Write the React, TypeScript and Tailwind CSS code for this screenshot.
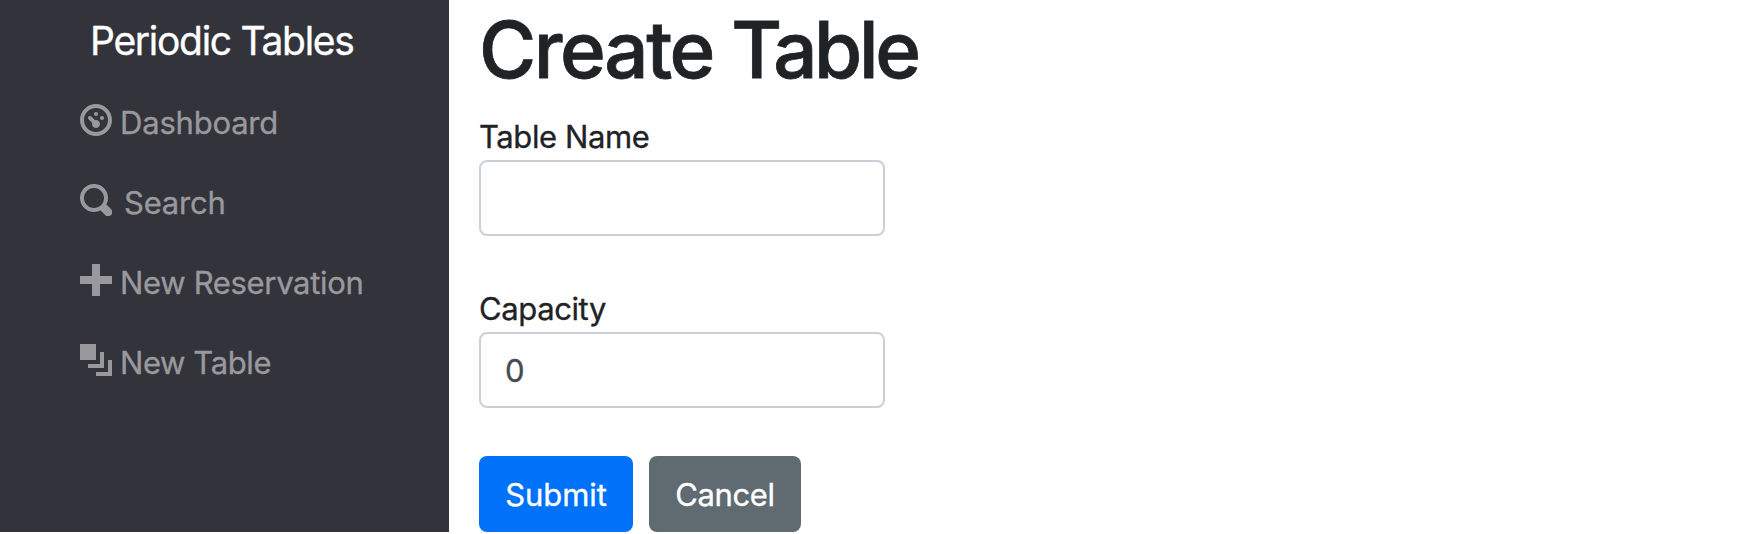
import { useState } from "react";

const icons = {
  dashboard:
    "M4 0c-2.2 0-4 1.8-4 4s1.8 4 4 4 4-1.8 4-4-1.8-4-4-4zm0 1c1.66 0 3 1.34 3 3s-1.34 3-3 3-3-1.34-3-3 1.34-3 3-3zm0 1c-.28 0-.5.22-.5.5s.22.5.5.5.5-.22.5-.5-.22-.5-.5-.5zm-1.66 1a.5.5 0 0 0-.19.84l.91.91c-.02.08-.06.16-.06.25 0 .55.45 1 1 1s1-.45 1-1-.45-1-1-1c-.09 0-.17.04-.25.06l-.91-.91a.5.5 0 0 0-.44-.16.5.5 0 0 0-.06 0zm3.16 0c-.28 0-.5.22-.5.5s.22.5.5.5.5-.22.5-.5-.22-.5-.5-.5z",
  search:
    "M3.5 0c-1.93 0-3.5 1.57-3.5 3.5s1.57 3.5 3.5 3.5c.59 0 1.17-.14 1.66-.41a1 1 0 0 0 .13.13l1 1a1.02 1.02 0 1 0 1.44-1.44l-1-1a1 1 0 0 0-.16-.13c.27-.49.44-1.06.44-1.66 0-1.93-1.55-3.5-3.5-3.5zm0 1c1.39 0 2.5 1.11 2.5 2.5 0 .66-.24 1.27-.66 1.72-.01.01-.02.02-.03.03a1 1 0 0 0-.13.13c-.44.4-1.04.63-1.69.63-1.39 0-2.5-1.11-2.5-2.5s1.11-2.5 2.5-2.5z",
  plus: "M3 0v3h-3v2h3v3h2v-3h3v-2h-3v-3h-2z",
  layers: "M0 0v4h4v-4h-4zm5 2v3h-3v1h4v-4h-1zm2 2v3h-3v1h4v-4h-1z",
};

const links = [
  { label: "Dashboard", icon: icons.dashboard, text: "ml-2 tracking-[-0.2px]" },
  { label: "Search", icon: icons.search, text: "ml-3 tracking-[-0.2px]" },
  { label: "New Reservation", icon: icons.plus, text: "ml-2 tracking-[-0.33px]" },
  { label: "New Table", icon: icons.layers, text: "ml-2 tracking-[-0.4px]" },
];

type FieldProps = {
  label: string;
  value: string;
  onChange: (v: string) => void;
};

function Field({ label, value, onChange }: FieldProps) {
  return (
    <label className="flex flex-col">
      <span className="h-12 leading-[50px] tracking-[-0.4px]">{label}</span>
      <input
        className="h-[76px] w-[406px] rounded-lg border-2 border-[#c9d0d7] bg-white px-6 text-[#434c52] outline-none"
        value={value}
        onChange={(e) => onChange(e.target.value)}
      />
    </label>
  );
}

export default function App() {
  const [name, setName] = useState("");
  const [capacity, setCapacity] = useState("0");

  return (
    <div className="flex h-[534px] items-start overflow-hidden bg-white font-['Inter',sans-serif] text-[31px] text-[#1f2326] [-webkit-text-stroke:0.35px]">
      <nav className="h-[532px] w-[449px] shrink-0 bg-[#33333b]">
        <a href="#" className="mt-[11px] ml-[90px] block h-[60px] text-[39px] leading-[60px] tracking-[-1.3px] whitespace-nowrap text-white">
          Periodic Tables
        </a>
        <ul className="mt-7 flex flex-col gap-8 pl-20">
          {links.map((link) => (
            <li key={link.label}>
              <a href="#" className="flex h-12 text-[#99999d]">
                <svg viewBox="0 0 8 8" className="mt-[5px] size-8 shrink-0" fill="currentColor">
                  <path d={link.icon} />
                </svg>
                <span className={`leading-[48px] whitespace-nowrap ${link.text}`}>{link.label}</span>
              </a>
            </li>
          ))}
        </ul>
      </nav>
      <main className="pl-[30px]">
        <h1 className="mt-[2px] h-24 text-[78px] leading-[96px] font-medium tracking-[-2.4px] whitespace-nowrap [-webkit-text-stroke:0.8px]">
          Create <span className="tracking-[-3.4px]">Table</span>
        </h1>
        <form className="mt-[14px]" onSubmit={(e) => e.preventDefault()}>
          <div className="flex flex-col gap-12">
            <Field label="Table Name" value={name} onChange={setName} />
            <Field label="Capacity" value={capacity} onChange={setCapacity} />
          </div>
          <div className="mt-12 flex gap-4 text-white">
            <button type="submit" className="h-[76px] w-[154px] rounded-lg bg-[#0072f9] pt-0.5 tracking-[-0.1px]">
              Submit
            </button>
            <button type="button" className="h-[76px] w-[152px] rounded-lg bg-[#606b71] pt-0.5 tracking-[-0.4px]">
              Cancel
            </button>
          </div>
        </form>
      </main>
    </div>
  );
}
